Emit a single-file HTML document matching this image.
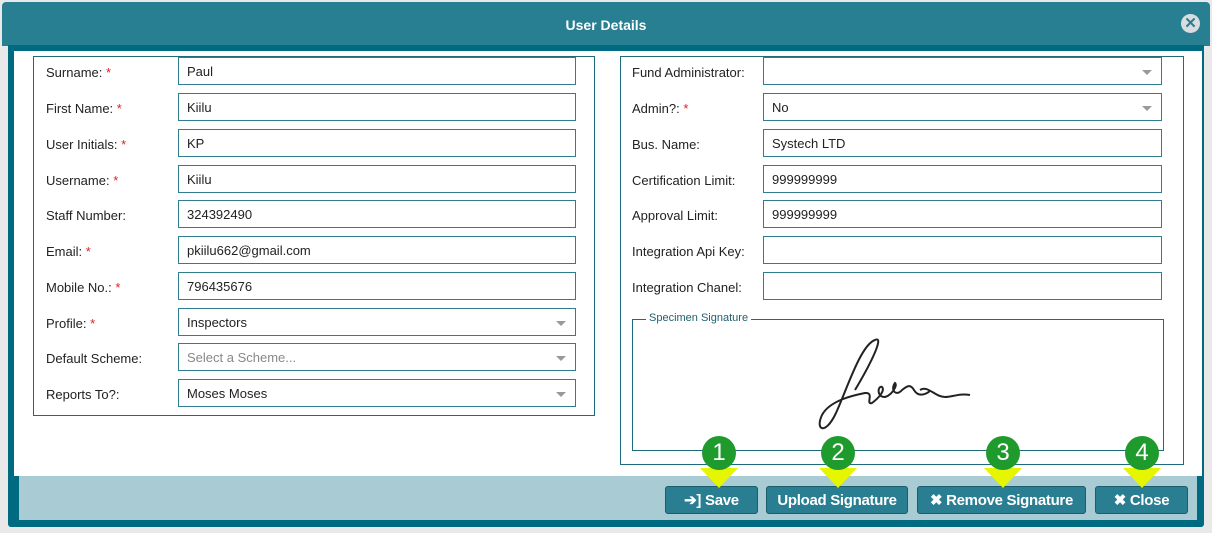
<!DOCTYPE html><html><head><style>
body{margin:0;width:1212px;height:533px;background:#e9e9e9;font-family:"Liberation Sans",sans-serif;position:relative;overflow:hidden}
.a{position:absolute}
.hdr{left:2px;top:2px;width:1208px;height:44px;background:#287f91;border-radius:4px 4px 0 0;color:#fff;font-weight:bold;font-size:14px;text-align:center;line-height:46px}
.frame{left:8px;top:45px;width:1196px;height:482px;background:#006a80;border-radius:0 0 3px 3px}
.body{left:14px;top:51px;width:1188px;height:425px;background:#fff}
.foot{left:19px;top:476px;width:1178px;height:44px;background:#a9cbd4}
.box{border:1px solid #1f6a7c}
.lab{font-size:13px;color:#222}
.lab b{color:#e02020;font-weight:normal}
.inp{border:1px solid #2f7d8e;height:28px;background:#fff;font-size:13px;line-height:28px;padding-left:8px;box-sizing:border-box;color:#222}
.dd:after{content:"";position:absolute;right:9px;top:12px;border:5px solid transparent;border-top:5px solid #999}
.btn{top:486px;height:28px;background:#297e92;border:1px solid #1b5d6d;border-radius:3px;color:#fff;font-weight:bold;font-size:15px;text-align:center;line-height:28px;box-sizing:border-box;letter-spacing:-.3px}
.c{width:34px;height:34px;border-radius:50%;background:#1f9a2c;color:#fff;font-size:24px;text-align:center;line-height:34px;top:436px}
.ar{width:0;height:0;border-left:19px solid transparent;border-right:19px solid transparent;border-top:20px solid #e6f500;top:468px}
</style></head><body>
<div class="a hdr">User Details</div>
<div class="a" style="right:12px;top:14px;width:19px;height:19px;border-radius:50%;background:#d8dde0;color:#287f91;font-size:15px;font-weight:bold;text-align:center;line-height:19px">✕</div>
<div class="a frame"></div>
<div class="a body"></div>
<div class="a foot"></div>
<div class="a box" style="left:33px;top:56px;width:560px;height:358px"></div>
<div class="a box" style="left:620px;top:56px;width:562px;height:407px"></div>

<div class="a lab" style="left:46px;top:65px">Surname: <b>*</b></div><div class="a inp" style="left:178px;top:57px;width:398px">Paul</div>
<div class="a lab" style="left:46px;top:101px">First Name: <b>*</b></div><div class="a inp" style="left:178px;top:93px;width:398px">Kiilu</div>
<div class="a lab" style="left:46px;top:137px">User Initials: <b>*</b></div><div class="a inp" style="left:178px;top:129px;width:398px">KP</div>
<div class="a lab" style="left:46px;top:173px">Username: <b>*</b></div><div class="a inp" style="left:178px;top:165px;width:398px">Kiilu</div>
<div class="a lab" style="left:46px;top:208px">Staff Number:</div><div class="a inp" style="left:178px;top:200px;width:398px">324392490</div>
<div class="a lab" style="left:46px;top:244px">Email: <b>*</b></div><div class="a inp" style="left:178px;top:236px;width:398px">pkiilu662@gmail.com</div>
<div class="a lab" style="left:46px;top:280px">Mobile No.: <b>*</b></div><div class="a inp" style="left:178px;top:272px;width:398px">796435676</div>
<div class="a lab" style="left:46px;top:316px">Profile: <b>*</b></div><div class="a inp dd" style="left:178px;top:308px;width:398px">Inspectors</div>
<div class="a lab" style="left:46px;top:351px">Default Scheme:</div><div class="a inp dd" style="left:178px;top:343px;width:398px;color:#888">Select a Scheme...</div>
<div class="a lab" style="left:46px;top:387px">Reports To?:</div><div class="a inp dd" style="left:178px;top:379px;width:398px">Moses Moses</div>

<div class="a lab" style="left:632px;top:65px">Fund Administrator:</div><div class="a inp dd" style="left:763px;top:57px;width:399px"></div>
<div class="a lab" style="left:632px;top:101px">Admin?: <b>*</b></div><div class="a inp dd" style="left:763px;top:93px;width:399px">No</div>
<div class="a lab" style="left:632px;top:137px">Bus. Name:</div><div class="a inp" style="left:763px;top:129px;width:399px">Systech LTD</div>
<div class="a lab" style="left:632px;top:173px">Certification Limit:</div><div class="a inp" style="left:763px;top:165px;width:399px">999999999</div>
<div class="a lab" style="left:632px;top:208px">Approval Limit:</div><div class="a inp" style="left:763px;top:200px;width:399px">999999999</div>
<div class="a lab" style="left:632px;top:244px">Integration Api Key:</div><div class="a inp" style="left:763px;top:236px;width:399px"></div>
<div class="a lab" style="left:632px;top:280px">Integration Chanel:</div><div class="a inp" style="left:763px;top:272px;width:399px"></div>
<div class="a box" style="left:632px;top:319px;width:530px;height:130px"></div>
<div class="a" style="left:646px;top:312px;background:#fff;padding:0 3px;font-size:11px;color:#1f5f70">Specimen Signature</div>
<svg class="a" style="left:810px;top:335px" width="170" height="105"><path d="M45 55 C60 30 75 0 65 5 C50 10 35 60 25 80 C15 100 5 95 12 80 C20 65 45 60 55 58 C65 57 55 70 62 68 C70 62 75 55 72 52 C68 50 66 62 75 62 C82 60 88 50 85 48 C80 55 86 62 92 55 C96 52 100 48 104 55 C108 62 115 60 120 56 M110 55 C118 50 125 62 135 62 C142 62 150 58 160 60" fill="none" stroke="#222" stroke-width="2"/></svg>

<div class="a btn" style="left:665px;width:93px">&#x2794;] Save</div>
<div class="a btn" style="left:766px;width:142px">Upload Signature</div>
<div class="a btn" style="left:917px;width:169px">✖ Remove Signature</div>
<div class="a btn" style="left:1095px;width:93px">✖ Close</div>
<div class="a ar" style="left:700px"></div><div class="a ar" style="left:819px"></div><div class="a ar" style="left:984px"></div><div class="a ar" style="left:1123px"></div>
<div class="a c" style="left:702px">1</div><div class="a c" style="left:821px">2</div><div class="a c" style="left:986px">3</div><div class="a c" style="left:1125px">4</div>
</body></html>
